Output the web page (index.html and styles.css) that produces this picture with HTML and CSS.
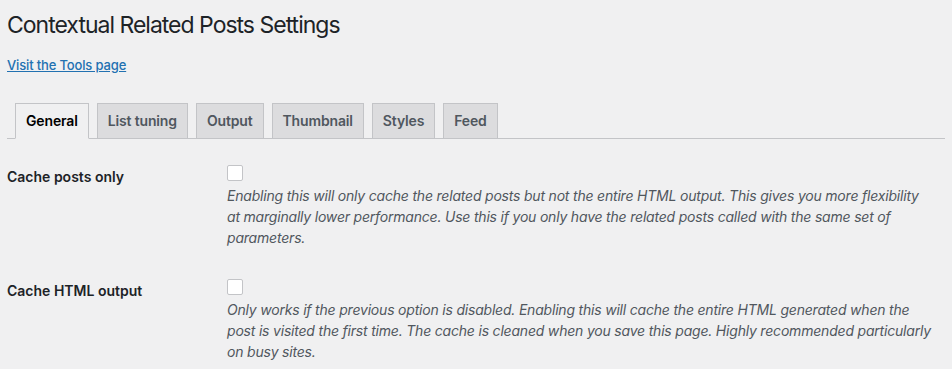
FILE: index.html
```html
<!DOCTYPE html>
<html lang="en">
<head>
  <meta charset="UTF-8">
  <title>Contextual Related Posts Settings</title>
  <link rel="stylesheet" href="styles.css">
</head>
<body>

  <div class="wrap">
    <h1>Contextual Related Posts Settings</h1>
    <p class="tools-link"><a href="#">Visit the Tools page</a></p>

    <nav class="nav-tab-wrapper">
      <a href="#" class="nav-tab nav-tab-active">General</a>
      <a href="#" class="nav-tab">List tuning</a>
      <a href="#" class="nav-tab">Output</a>
      <a href="#" class="nav-tab">Thumbnail</a>
      <a href="#" class="nav-tab">Styles</a>
      <a href="#" class="nav-tab">Feed</a>
    </nav>

    <table class="form-table">
      <tr>
        <th scope="row">Cache posts only</th>
        <td>
          <input type="checkbox" class="check">
          <p class="description">Enabling this will only cache the related posts but not the entire HTML output. This gives you more flexibility at marginally lower performance. Use this if you only have the related posts called with the same set of parameters.</p>
        </td>
      </tr>
      <tr>
        <th scope="row">Cache HTML output</th>
        <td>
          <input type="checkbox" class="check">
          <p class="description">Only works if the previous option is disabled. Enabling this will cache the entire HTML generated when the post is visited the first time. The cache is cleaned when you save this page. Highly recommended particularly on busy sites.</p>
        </td>
      </tr>
    </table>
  </div>

</body>
</html>
```

FILE: styles.css
```css
* {
  box-sizing: border-box;
  margin: 0;
  padding: 0;
}

html, body {
  height: 100%;
}

body {
  background-color: #f0f0f1;
  color: #1d2327;
  font-family: Inter, "Liberation Sans", sans-serif;
  font-size: 13px;
  line-height: 1.4;
  overflow: hidden;
}

.wrap {
  padding: 0 7px;
}

h1 {
  font-size: 23px;
  font-weight: 400;
  line-height: 1.3;
  letter-spacing: -1px;
  padding-top: 11px;
}

.tools-link {
  margin-top: 15px;
}

.tools-link a {
  color: #2271b1;
  font-weight: 500;
  letter-spacing: -0.15px;
}

.nav-tab-wrapper {
  display: flex;
  margin-top: 29px;
  border-bottom: 1px solid #c3c4c7;
}

.nav-tab {
  display: block;
  margin-left: 8px;
  margin-bottom: -1px;
  padding: 5px 10px;
  font-size: 14px;
  font-weight: 600;
  line-height: 24px;
  letter-spacing: -0.15px;
  color: #50575e;
  text-decoration: none;
  background: #dcdcde;
  border: 1px solid #c3c4c7;
}

.nav-tab-active {
  color: #000;
  background: #f0f0f1;
  border-bottom-color: #f0f0f1;
}

.form-table {
  width: 100%;
  border-collapse: collapse;
  margin-top: 7px;
}

.form-table th {
  width: 210px;
  padding: 22px 10px 20px 0;
  text-align: left;
  vertical-align: top;
  font-size: 14px;
  font-weight: 600;
  line-height: 1.3;
}

.form-table td {
  padding: 15px 10px 12px;
  vertical-align: top;
}

.check {
  appearance: none;
  display: block;
  width: 16px;
  height: 16px;
  margin-top: 4px;
  background: #fff;
  border: 1px solid #c3c4c7;
  border-radius: 2px;
}

.description {
  margin-top: 4px;
  font-size: 14px;
  font-style: italic;
  line-height: 21px;
  letter-spacing: -0.2px;
  color: #50575e;
}
```
